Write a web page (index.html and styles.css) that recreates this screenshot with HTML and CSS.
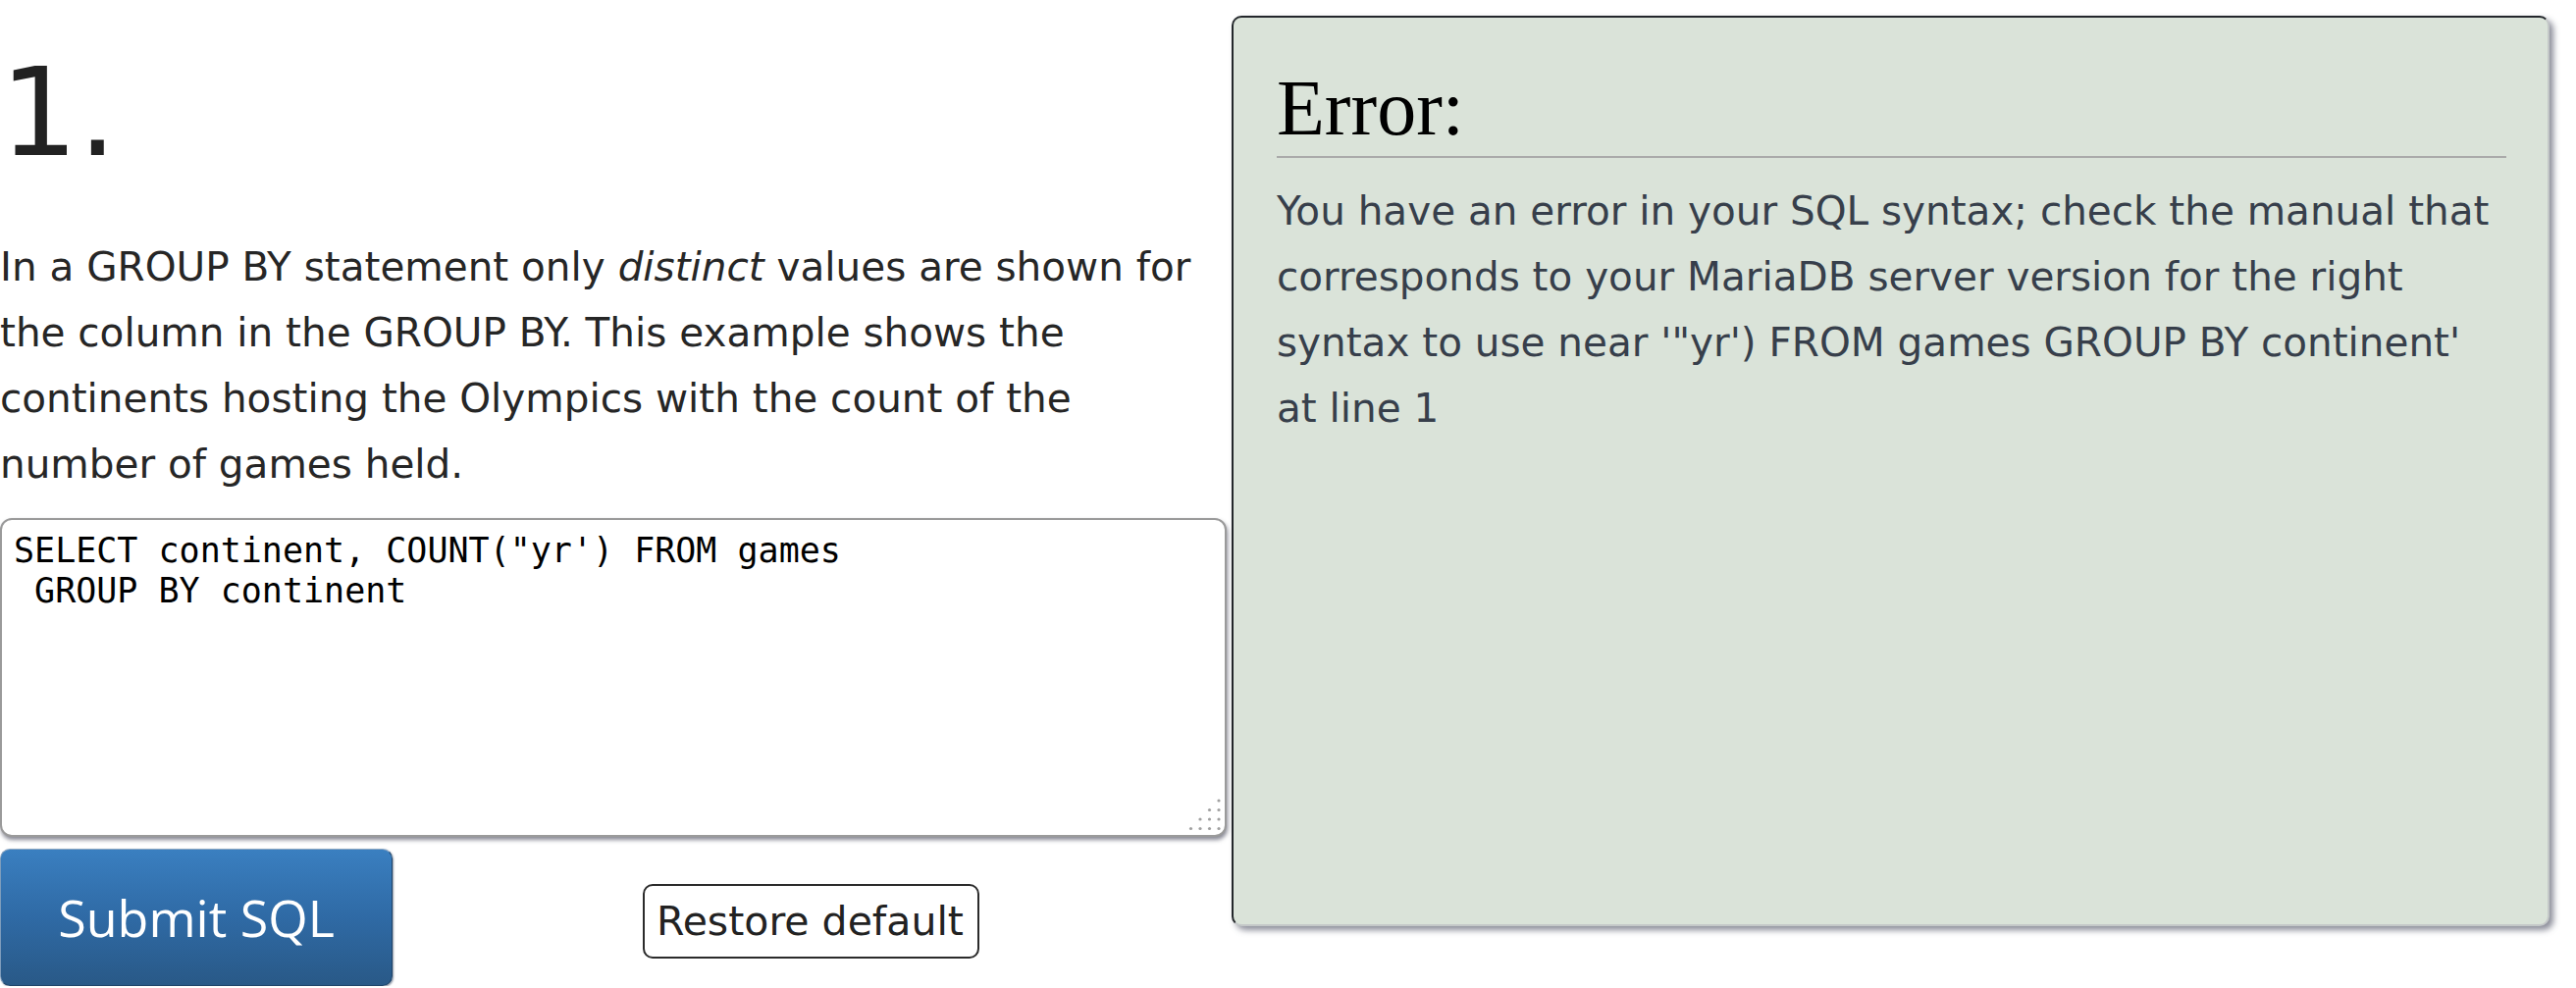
FILE: index.html
```html
<!DOCTYPE html>
<html lang="en">
<head>
<meta charset="utf-8">
<title>SQL GROUP BY</title>
<link rel="stylesheet" href="styles.css">
</head>
<body>
<div class="page">
  <div class="question">
    <h1 class="qnum">1.</h1>
    <p class="intro">In a GROUP BY statement only <em>distinct</em> values are shown for the column in the GROUP BY. This example shows the continents hosting the Olympics with the count of the number of games held.</p>
    <div class="editor">
      <textarea class="sql" spellcheck="false">SELECT continent, COUNT("yr') FROM games
 GROUP BY continent</textarea>
      <svg class="grip" width="36" height="36" viewBox="0 0 36 36" aria-hidden="true">
        <g fill="#a0a0a0">
          <circle cx="32" cy="4" r="1.6"/>
          <circle cx="32" cy="13.5" r="1.6"/>
          <circle cx="22.5" cy="13.5" r="1.6"/>
          <circle cx="32" cy="23" r="1.6"/>
          <circle cx="22.5" cy="23" r="1.6"/>
          <circle cx="13" cy="23" r="1.6"/>
          <circle cx="32" cy="32.5" r="1.6"/>
          <circle cx="22.5" cy="32.5" r="1.6"/>
          <circle cx="13" cy="32.5" r="1.6"/>
          <circle cx="3.5" cy="32.5" r="1.6"/>
        </g>
      </svg>
    </div>
    <div class="actions">
      <button class="submit" type="button">Submit SQL</button>
      <button class="restore" type="button">Restore default</button>
    </div>
  </div>
  <div class="result">
    <h2 class="result-title">Error:</h2>
    <p class="result-msg">You have an error in your SQL syntax; check the manual that corresponds to your MariaDB server version for the right syntax to use near '"yr') FROM games GROUP BY continent' at line 1</p>
  </div>
</div>
</body>
</html>
```

FILE: styles.css
```css
html, body {
  margin: 0;
  padding: 0;
  background: #ffffff;
}

body {
  font-family: "DejaVu Sans", Verdana, sans-serif;
  color: #242424;
}

.page {
  display: flex;
  align-items: flex-start;
}

.question {
  width: 1250px;
  flex: none;
}

.qnum {
  margin: 42px 0 0 0;
  font-family: "DejaVu Sans", sans-serif;
  font-weight: normal;
  font-size: 125px;
  line-height: 146px;
  color: #222222;
}

.intro {
  margin: 51px 0 0 0;
  font-size: 40.5px;
  line-height: 67px;
  color: #262626;
}

.intro em {
  font-style: italic;
}

.editor {
  position: relative;
  margin-top: 21px;
  height: 325px;
}

.sql {
  display: block;
  box-sizing: border-box;
  width: 1250px;
  height: 325px;
  margin: 0;
  padding: 11px 12px;
  border: 2px solid #9a9a9a;
  border-radius: 12px;
  background: #ffffff;
  font-family: "DejaVu Sans Mono", monospace;
  font-size: 35px;
  line-height: 41px;
  color: #000000;
  resize: none;
  outline: none;
  overflow: hidden;
  box-shadow: 1px 3px 4px rgba(70, 72, 90, 0.65);
}

.grip {
  position: absolute;
  right: 4px;
  bottom: 5px;
}

.actions {
  display: flex;
  align-items: flex-start;
  margin-top: 12px;
}

.submit {
  box-sizing: border-box;
  width: 400px;
  height: 140px;
  margin: 0;
  padding: 0;
  border: 1px solid #1f4469;
  border-top-color: #8fa9c4;
  border-left-color: #7e9cbb;
  border-radius: 10px;
  background: linear-gradient(to bottom, #3a7fc0 0%, #2f6aa5 50%, #295987 100%);
  color: #ffffff;
  font-family: "Open Sans", "Noto Sans", sans-serif;
  font-size: 52px;
  line-height: 1;
  box-shadow: 1px 1px 2px rgba(20, 40, 70, 0.5);
  cursor: pointer;
}

.restore {
  box-sizing: border-box;
  width: 343px;
  height: 76px;
  margin: 36px 0 0 255px;
  padding: 0 0 0 12px;
  border: 2px solid #2b2b2b;
  border-radius: 10px;
  background: #ffffff;
  color: #222222;
  font-family: "DejaVu Sans", sans-serif;
  font-size: 41px;
  line-height: 1;
  text-align: left;
  cursor: pointer;
}

.result {
  box-sizing: border-box;
  width: 1343px;
  height: 928px;
  margin: 16px 0 0 5px;
  padding: 0 42px 0 44px;
  background: #dae3d9;
  border: 2px solid #c4c8c8;
  border-top-color: #23272b;
  border-left-color: #23272b;
  border-radius: 10px;
  box-shadow: 4px 4px 6px rgba(90, 92, 110, 0.7);
  flex: none;
}

.result-title {
  margin: 48px 0 0 0;
  padding: 0 0 4px 0;
  font-family: "Liberation Serif", "Times New Roman", serif;
  font-weight: normal;
  font-size: 80px;
  line-height: 88.6px;
  color: #000000;
  border-bottom: 2px solid #aaaaaa;
}

.result-msg {
  margin: 21px 0 0 0;
  font-size: 40.5px;
  line-height: 67px;
  color: #373f4b;
}
```
